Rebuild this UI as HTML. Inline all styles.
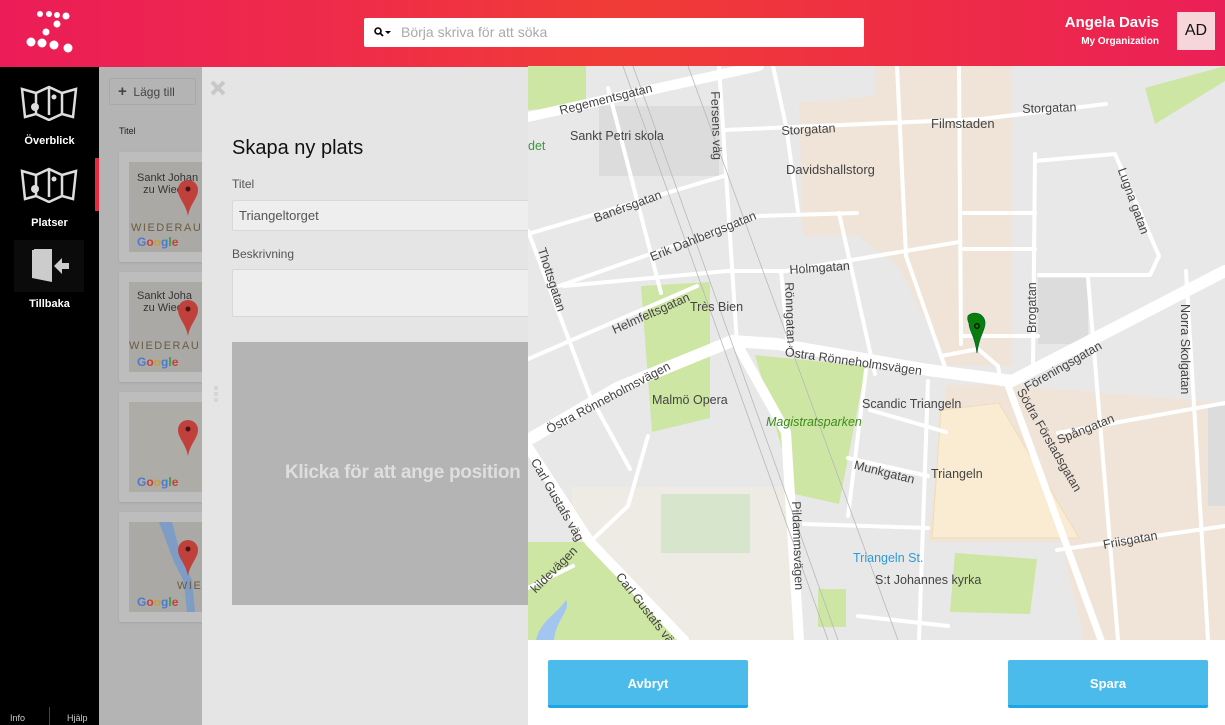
<!DOCTYPE html>
<html><head><meta charset="utf-8"><style>
*{margin:0;padding:0;box-sizing:border-box}
body{width:1225px;height:725px;position:relative;overflow:hidden;font-family:"Liberation Sans",Arial,sans-serif;background:#e5e5e5}
.abs{position:absolute}
#hdr{left:0;top:0;width:1225px;height:67px;background:linear-gradient(90deg,#ec1c58 0%,#ef2d48 30%,#f03c36 50%,#ee2d45 75%,#eb1f57 100%)}
#side{left:0;top:67px;width:99px;height:658px;background:#000}
.navl{color:#fff;font-size:11px;font-weight:bold;width:99px;text-align:center}
#gray{left:99px;top:67px;width:103px;height:658px;background:#b4b4b4}
.card{left:119px;width:100px;height:110px;background:#bdbdbd;border-radius:2px;box-shadow:0 1px 2px rgba(0,0,0,.1)}
.thumb{left:10px;top:10px;width:90px;height:90px;background:#aaa9a5;overflow:hidden}
#panel{left:202px;top:67px;width:326px;height:658px;background:#e5e5e5}
.lbl{font-size:12px;color:#555}
.map{left:528px;top:66px;width:697px;height:574px;background:#e8e8e8;overflow:hidden}
.btn{top:660px;width:200px;height:48px;background:#4bbbec;border-bottom:3px solid #1ea6e4;border-radius:2px;color:#fff;font-weight:bold;font-size:13px;text-align:center;line-height:48px}
.ml{position:absolute;font-size:12.5px;color:#444;white-space:nowrap;transform-origin:0 0}
.g{font-size:12px;font-weight:bold}
</style></head><body>
<div id="hdr" class="abs">
 <svg class="abs" style="left:25px;top:10px" width="52" height="45">
  <g fill="#fff"><circle cx="15" cy="4" r="3"/><circle cx="24" cy="4" r="3"/><circle cx="32" cy="5" r="3"/><circle cx="41" cy="6" r="3.5"/><circle cx="32" cy="14" r="3.5"/><circle cx="21" cy="22" r="3.5"/><circle cx="6" cy="32" r="4.5"/><circle cx="17" cy="33" r="4.5"/><circle cx="29" cy="35" r="4.5"/><circle cx="43" cy="38" r="4.5"/></g>
 </svg>
 <div class="abs" style="left:364px;top:18px;width:500px;height:29px;background:#fff;border-radius:2px">
  <svg class="abs" style="left:10px;top:9px" width="18" height="12"><circle cx="4" cy="4" r="3" fill="none" stroke="#000" stroke-width="1.6"/><path d="M6 6l3 3" stroke="#000" stroke-width="1.8"/><path d="M11 4h6l-3 3z" fill="#000"/></svg>
  <div class="abs" style="left:37px;top:6px;font-size:14px;color:#aaa">Börja skriva för att söka</div>
 </div>
 <div class="abs" style="right:66px;top:14px;color:#fff;font-size:15px;font-weight:bold;text-align:right">Angela Davis</div>
 <div class="abs" style="right:66px;top:36px;color:#fff;font-size:10px;font-weight:bold;text-align:right">My Organization</div>
 <div class="abs" style="left:1177px;top:12px;width:38px;height:38px;background:#f7d6da;font-size:16px;line-height:38px;text-align:center;color:#111">AD</div>
</div>
<div id="side" class="abs">
 <svg class="abs" style="left:20px;top:18px" width="58" height="36" viewBox="0 0 58 36"><g fill="none" stroke="#ddd" stroke-width="2.5"><path d="M2 4l14 4 13-6 13 6 14-4-3 28-11-3-13 6-13-6-11 3z"/><path d="M16 8v22M29 2v28M42 8v22"/></g><circle cx="15" cy="22" r="4" fill="#ddd"/><circle cx="34" cy="12" r="2.5" fill="#ddd"/></svg>
 <div class="abs navl" style="top:68px">Överblick</div>
 <svg class="abs" style="left:20px;top:100px" width="58" height="36" viewBox="0 0 58 36"><g fill="none" stroke="#ddd" stroke-width="2.5"><path d="M2 4l14 4 13-6 13 6 14-4-3 28-11-3-13 6-13-6-11 3z"/><path d="M16 8v22M29 2v28M42 8v22"/></g><circle cx="15" cy="22" r="4" fill="#ddd"/><circle cx="34" cy="12" r="2.5" fill="#ddd"/></svg>
 <div class="abs navl" style="top:150px">Platser</div>
 <div class="abs" style="left:95px;top:91px;width:4px;height:53px;background:#e8283f"></div>
 <div class="abs" style="left:14px;top:173px;width:70px;height:52px;background:#0b0b0b">
  <svg class="abs" style="left:16px;top:8px" width="40" height="36"><path d="M2 2h20v32l-20-4z" fill="#ccc"/><path d="M4 1h18v2H4z" fill="#ccc"/><path d="M24 18l8-8v5h7v6h-7v5z" fill="#ccc"/></svg>
 </div>
 <div class="abs navl" style="top:231px">Tillbaka</div>
 <div class="abs" style="left:10px;top:646px;color:#ccc;font-size:9px">Info</div>
 <div class="abs" style="left:49px;top:640px;width:1px;height:18px;background:#444"></div>
 <div class="abs" style="left:67px;top:646px;color:#ccc;font-size:9px">Hjälp</div>
</div>
<div id="gray" class="abs">
 <div class="abs" style="left:10px;top:11px;width:87px;height:27px;border:1px solid #a8a8a8;border-radius:2px;font-size:12px;color:#444;line-height:25px;padding-left:8px"><b style="font-size:15px">+</b>&nbsp; Lägg till</div>
 <div class="abs" style="left:20px;top:59px;font-size:9px;color:#222">Titel</div>
</div>
<div class="abs card" style="top:152px"><div class="abs thumb"><div class="abs" style="left:8px;top:10px;font-size:11px;color:#333;line-height:12px">Sankt Johan<br>&nbsp;&nbsp;zu Wiede</div><div class="abs" style="left:2px;top:60px;font-size:11px;color:#6b5c40;letter-spacing:1.5px">WIEDERAU</div><div class="abs g" style="left:8px;top:73px"><span style="color:#4a7bd0">G</span><span style="color:#c9403a">o</span><span style="color:#c9a12a">o</span><span style="color:#4a7bd0">g</span><span style="color:#3a9a4a">l</span><span style="color:#c9403a">e</span></div></div></div>
<div class="abs card" style="top:272px"><div class="abs thumb"><div class="abs" style="left:8px;top:8px;font-size:11px;color:#333;line-height:12px">Sankt Joha<br>&nbsp;&nbsp;zu Wied</div><div class="abs" style="left:0px;top:58px;font-size:11px;color:#6b5c40;letter-spacing:1.5px">WIEDERAU</div><div class="abs g" style="left:8px;top:73px"><span style="color:#4a7bd0">G</span><span style="color:#c9403a">o</span><span style="color:#c9a12a">o</span><span style="color:#4a7bd0">g</span><span style="color:#3a9a4a">l</span><span style="color:#c9403a">e</span></div></div></div>
<div class="abs card" style="top:392px"><div class="abs thumb" style="background:#aeaca6"><div class="abs g" style="left:8px;top:73px"><span style="color:#4a7bd0">G</span><span style="color:#c9403a">o</span><span style="color:#c9a12a">o</span><span style="color:#4a7bd0">g</span><span style="color:#3a9a4a">l</span><span style="color:#c9403a">e</span></div></div></div>
<div class="abs card" style="top:512px"><div class="abs thumb"><svg class="abs" style="left:0;top:0" width="90" height="90"><path d="M30 0l15 40 10 20 3 30h8l-3-32-10-20-10-38z" fill="#7d9cc6"/></svg><div class="abs" style="left:48px;top:58px;font-size:11px;color:#6b5c40;letter-spacing:1.5px">WIE</div><div class="abs g" style="left:8px;top:73px"><span style="color:#4a7bd0">G</span><span style="color:#c9403a">o</span><span style="color:#c9a12a">o</span><span style="color:#4a7bd0">g</span><span style="color:#3a9a4a">l</span><span style="color:#c9403a">e</span></div></div></div>
<svg class="abs" style="left:170px;top:172px" width="40" height="460">
 <g fill="#c0403c"><path d="M18 8a10 10 0 0 1 10 10c0 8-8 14-10 26-2-12-10-18-10-26a10 10 0 0 1 10-10z"/><path d="M18 128a10 10 0 0 1 10 10c0 8-8 14-10 26-2-12-10-18-10-26a10 10 0 0 1 10-10z"/><path d="M18 248a10 10 0 0 1 10 10c0 8-8 14-10 26-2-12-10-18-10-26a10 10 0 0 1 10-10z"/><path d="M18 368a10 10 0 0 1 10 10c0 8-8 14-10 26-2-12-10-18-10-26a10 10 0 0 1 10-10z"/></g>
 <g fill="#4a1414"><circle cx="18" cy="17" r="2.5"/><circle cx="18" cy="137" r="2.5"/><circle cx="18" cy="257" r="2.5"/><circle cx="18" cy="377" r="2.5"/></g>
</svg>
<div id="panel" class="abs">
 <svg class="abs" style="left:7px;top:12px" width="18" height="18"><path d="M3 3l12 12M15 3L3 15" stroke="#c8c8c8" stroke-width="4"/></svg>
 <div class="abs" style="left:30px;top:70px;font-size:20px;color:#111">Skapa ny plats</div>
 <div class="abs lbl" style="left:30px;top:110px">Titel</div>
 <div class="abs" style="left:30px;top:133px;width:310px;height:31px;background:#eeeeee;border:1px solid #d8d8d8;border-radius:2px;font-size:13px;color:#555;padding:7px 0 0 6px">Triangeltorget</div>
 <div class="abs lbl" style="left:30px;top:180px">Beskrivning</div>
 <div class="abs" style="left:30px;top:202px;width:310px;height:48px;background:#eeeeee;border:1px solid #d8d8d8;border-radius:2px"></div>
 <div class="abs" style="left:12px;top:319px;width:4px;height:16px;background:repeating-linear-gradient(#d6d6d6 0 4px,transparent 4px 6px)"></div>
 <div class="abs" style="left:30px;top:275px;width:310px;height:263px;background:#b4b4b4"></div>
 <div class="abs" style="left:83px;top:395px;font-size:19px;font-weight:bold;color:#dedede;white-space:nowrap;letter-spacing:-.3px">Klicka för att ange position</div>
</div>
<div class="abs map">
<svg width="697" height="574" style="position:absolute;left:0;top:0">
 <rect width="697" height="574" fill="#e8e8e8"/>
 <rect x="71" y="40" width="120" height="70" fill="#dcdcdc"/>
 <polygon points="44,421 258,421 271,574 44,574" fill="#eeebe4"/>
 <rect x="133" y="428" width="89" height="59" fill="#d8e5cd"/>
 <polygon points="271,37 347,30 347,0 484,0 484,300 420,300 395,250 370,200 330,170 275,170" fill="#f0e4d8"/>
 <polygon points="480,319 697,337 697,574 556,574 533,476 400,476 418,319" fill="#f0e4d8"/>
 <polygon points="413,344 471,337 551,472 404,472" fill="#f9ecd3" stroke="#eedcb8"/>
 <rect x="510" y="212" width="50" height="66" fill="#dcdcdc"/>
 <rect x="680" y="340" width="17" height="100" fill="#dcdcdc"/>
 <g fill="#cde6a3">
  <polygon points="227,289 338,300 311,438 267,428"/>
  <polygon points="113,220 182,216 182,352 124,366"/>
  <polygon points="0,476 62,476 160,574 0,574"/>
  <polygon points="0,0 58,0 58,40 0,44"/>
  <polygon points="427,487 509,493 502,548 422,546"/>
  <polygon points="617,22 697,0 697,15 627,58"/>
  <rect x="290" y="523" width="28" height="38"/>
 </g>
 <path d="M8 574c5-20 20-25 30-40 5 10-10 20-12 40z" fill="#a3c6f0"/>
 <g fill="none" stroke="#fff" stroke-linecap="round" stroke-linejoin="round">
  <g stroke-width="4">
   <path d="M196 64L453 53L578 38"/><path d="M36 220L200 205L258 205L431 176"/><path d="M0 168L196 110"/><path d="M31 220L231 150L329 147"/><path d="M0 293L169 220"/>
   <path d="M191 0L209 278"/><path d="M253 205L260 278"/><path d="M431 0L433 278"/><path d="M369 0L378 190L418 304"/><path d="M311 147L347 308"/>
   <path d="M0 165L62 330L102 403"/><path d="M80 22L133 227"/><path d="M507 95L587 88L631 190L622 209L511 209"/><path d="M507 88L505 300"/>
   <path d="M530 367L697 337"/><path d="M529 484L697 460"/><path d="M320 392L400 410"/><path d="M436 147L507 147"/><path d="M436 183L507 183"/>
   <path d="M658 205L680 574"/><path d="M338 304L320 450"/><path d="M276 458L400 462"/><path d="M400 315L391 574"/><path d="M342 344L418 366"/>
   <path d="M245 0L258 60L270 145"/><path d="M560 212L590 574"/><path d="M0 522L45 500"/><path d="M120 370L100 440L62 476"/><path d="M330 550L420 560"/>
   <path d="M436 270L510 270"/><path d="M413 290L450 283L470 300L473 318"/>
  </g>
  <g stroke-width="10"><path d="M0 51L231 0"/><path d="M209 278L258 366L271 574"/><path d="M0 381L62 476L156 574"/></g>
  <g stroke-width="7"><path d="M480 319L573 574"/></g>
  <g stroke-width="12"><path d="M0 374L89 322L204 275L249 278L400 304L484 315L697 205"/></g>
 </g>
 <g stroke="#b8b8b8" stroke-width=".8" fill="none"><path d="M95 0L300 574"/><path d="M105 0L310 574"/><path d="M160 0L370 574"/></g>
 <path d="M441 252a10 10 0 0 1 17 7c0 8-6 12-8 30-2-18-8-22-8-30a10 10 0 0 1-1-7z" fill="#0a7d0a" stroke="#063" stroke-width=".8" transform="translate(-1,-2)"/>
 <circle cx="449" cy="260" r="2.3" fill="none" stroke="#000" stroke-width="1.2"/>
</svg>
 <div class="ml" style="left:42px;top:63px">Sankt Petri skola</div>
 <div class="ml" style="left:0;top:73px;color:#3a9a3a">det</div>
 <div class="ml" style="left:258px;top:96px;font-size:13px">Davidshallstorg</div>
 <div class="ml" style="left:403px;top:50px;font-size:13px">Filmstaden</div>
 <div class="ml" style="left:253px;top:58px;transform:rotate(-3deg)">Storgatan</div>
 <div class="ml" style="left:494px;top:36px;transform:rotate(-2deg)">Storgatan</div>
 <div class="ml" style="left:30px;top:38px;transform:rotate(-14deg)">Regementsgatan</div>
 <div class="ml" style="left:64px;top:146px;transform:rotate(-20deg)">Banérsgatan</div>
 <div class="ml" style="left:120px;top:185px;transform:rotate(-22deg)">Erik Dahlbergsgatan</div>
 <div class="ml" style="left:261px;top:197px;transform:rotate(-4deg)">Holmgatan</div>
 <div class="ml" style="left:82px;top:258px;transform:rotate(-24deg)">Helmfeltsgatan</div>
 <div class="ml" style="left:162px;top:234px">Très Bien</div>
 <div class="ml" style="left:16px;top:358px;transform:rotate(-28deg)">Östra Rönneholmsvägen</div>
 <div class="ml" style="left:258px;top:279px;transform:rotate(8deg)">Östra Rönneholmsvägen</div>
 <div class="ml" style="left:124px;top:327px">Malmö Opera</div>
 <div class="ml" style="left:238px;top:349px;color:#3d8a1e;font-style:italic">Magistratsparken</div>
 <div class="ml" style="left:334px;top:331px">Scandic Triangeln</div>
 <div class="ml" style="left:403px;top:401px">Triangeln</div>
 <div class="ml" style="left:328px;top:392px;transform:rotate(14deg)">Munkgatan</div>
 <div class="ml" style="left:325px;top:485px;color:#2f9ad8">Triangeln St.</div>
 <div class="ml" style="left:347px;top:507px">S:t Johannes kyrka</div>
 <div class="ml" style="left:494px;top:316px;transform:rotate(-30deg)">Föreningsgatan</div>
 <div class="ml" style="left:527px;top:368px;transform:rotate(-22deg)">Spångatan</div>
 <div class="ml" style="left:574px;top:472px;transform:rotate(-10deg)">Friisgatan</div>
 <div class="ml" style="left:498px;top:320px;transform:rotate(60deg)">Södra Förstadsgatan</div>
 <div class="ml" style="left:664px;top:238px;transform:rotate(90deg)">Norra Skolgatan</div>
 <div class="ml" style="left:600px;top:100px;transform:rotate(70deg)">Lugna gatan</div>
 <div class="ml" style="left:497px;top:267px;transform:rotate(-90deg)">Brogatan</div>
 <div class="ml" style="left:194px;top:25px;transform:rotate(88deg)">Fersens väg</div>
 <div class="ml" style="left:268px;top:216px;transform:rotate(88deg)">Rönngatan</div>
 <div class="ml" style="left:275px;top:435px;transform:rotate(88deg)">Pildammsvägen</div>
 <div class="ml" style="left:20px;top:180px;transform:rotate(72deg)">Thottsgatan</div>
 <div class="ml" style="left:12px;top:390px;transform:rotate(60deg)">Carl Gustafs väg</div>
 <div class="ml" style="left:96px;top:504px;transform:rotate(52deg)">Carl Gustafs väg</div>
 <div class="ml" style="left:0;top:520px;transform:rotate(-45deg)">kildevägen</div>
</div>
<div class="abs" style="left:528px;top:640px;width:697px;height:85px;background:#fff"></div>
<div class="abs btn" style="left:548px">Avbryt</div>
<div class="abs btn" style="left:1008px">Spara</div>
</body></html>
